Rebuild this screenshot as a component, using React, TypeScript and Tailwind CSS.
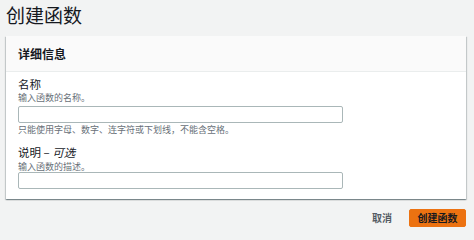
export default function App() {
  return (
    <div
      className="w-[474px] h-[240px] overflow-hidden bg-[#f2f3f3] pl-[6px] pr-[8px] text-[#16191f]"
      style={{ fontFamily: '"Noto Sans CJK SC", "Noto Sans", sans-serif' }}
    >
      <h1 className="h-[36px] flex items-center text-[19px] leading-none pb-[7px]">创建函数</h1>

      <div className="bg-white shadow-[0_1px_1px_0_rgba(0,28,36,0.3),1px_1px_1px_0_rgba(0,28,36,0.15),-1px_1px_1px_0_rgba(0,28,36,0.15)]">
        <div className="h-[36px] flex items-center px-[12px] bg-[#fafafa] border-b border-[#eaeded]">
          <h2 className="text-[12px] font-bold leading-none">详细信息</h2>
        </div>

        <div className="px-[12px] pt-[6px] pb-[10px]">
          <div className="text-[11.5px] leading-[13px]">名称</div>
          <div className="mt-[1px] text-[9px] leading-[12px] text-[#687078]">输入函数的名称。</div>
          <input className="mt-[2px] block w-[325px] h-[17px] border border-[#aab7b8] rounded-[2px] bg-white" />
          <div className="mt-[1px] text-[9px] leading-[12px] text-[#687078]">只能使用字母、数字、连字符或下划线，不能含空格。</div>

          <div className="mt-[10px] text-[11.5px] leading-[13px]">
            说明 – <i>可选</i>
          </div>
          <div className="mt-[2px] text-[9px] leading-[11px] text-[#687078]">输入函数的描述。</div>
          <input className="block w-[325px] h-[17px] border border-[#aab7b8] rounded-[2px] bg-white" />
        </div>
      </div>

      <div className="flex justify-end items-center gap-[17px] mt-[10px]">
        <button className="text-[10px] font-bold text-[#545b64] leading-none">取消</button>
        <button className="w-[57px] h-[18px] bg-[#ec7211] border border-[#ec7211] rounded-[2px] text-[10px] font-bold text-[#16191f] leading-none">
          创建函数
        </button>
      </div>
    </div>
  );
}
